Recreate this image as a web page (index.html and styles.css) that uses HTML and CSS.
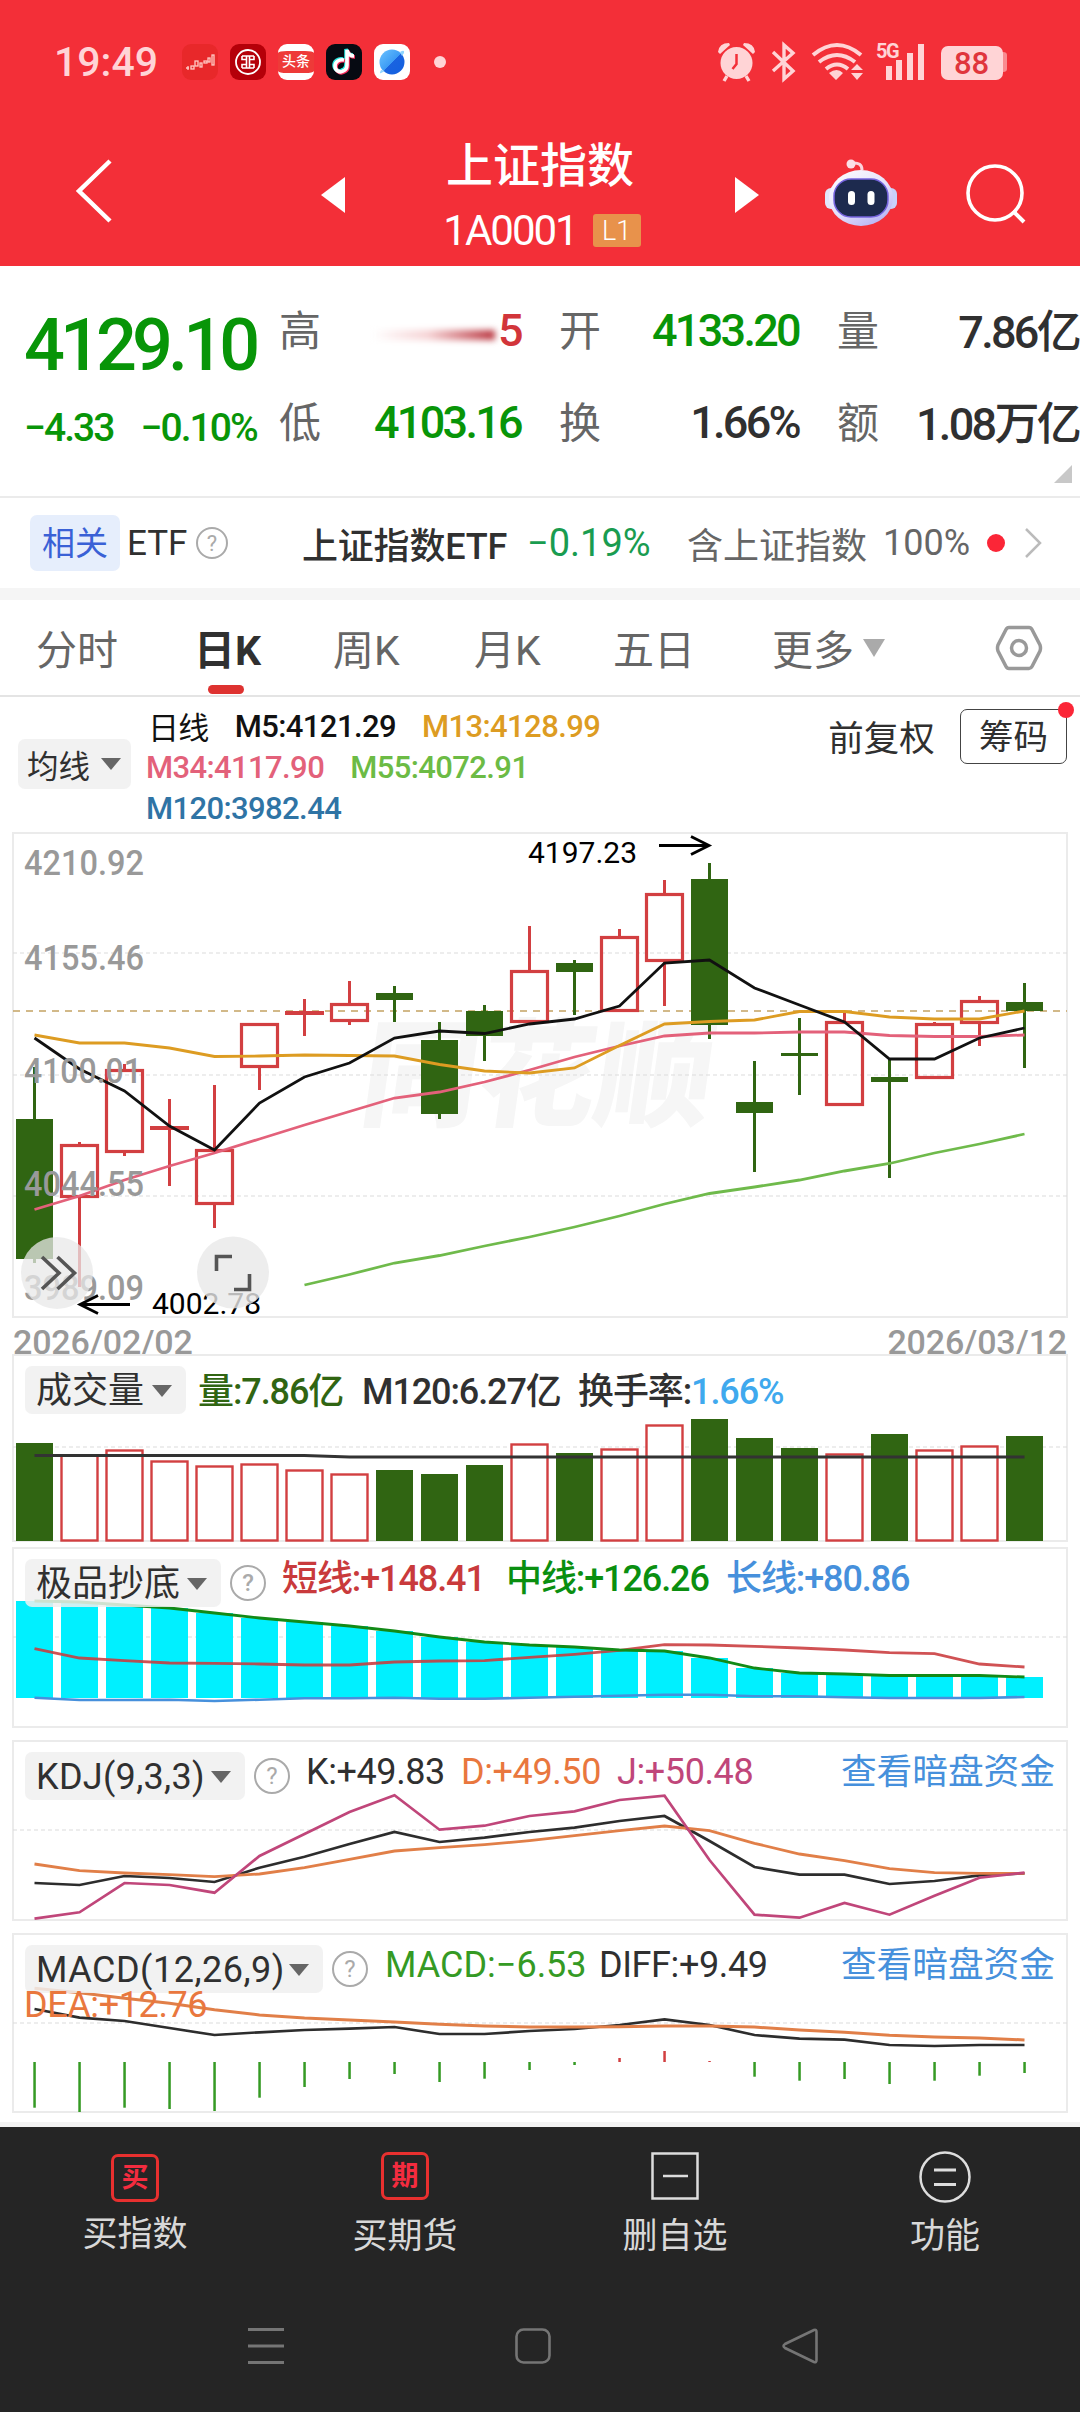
FILE: index.html
```html
<!DOCTYPE html>
<html lang="zh-CN">
<head>
<meta charset="UTF-8">
<meta name="viewport" content="width=device-width, initial-scale=1.0">
<title>上证指数 1A0001</title>
<link rel="stylesheet" href="styles.css">
</head>
<body>
<header class="header">
  <div class="status">
    <span class="time">19:49</span>
    <div class="apps">
      <svg class="app" viewBox="0 0 36 36"><rect width="36" height="36" rx="9" fill="#e8282a"/><g fill="none" stroke="#ffc9c4" stroke-width="1.3"><path d="M4 24h3M6 22v4"/><rect x="9" y="22" width="3" height="3"/><rect x="13" y="17" width="3" height="5"/><rect x="18" y="19" width="2" height="4"/><rect x="22" y="17" width="3" height="2"/><rect x="26" y="14" width="2" height="4"/><rect x="30" y="11" width="2" height="10"/></g></svg>
      <svg class="app" viewBox="0 0 36 36"><rect width="36" height="36" rx="9" fill="#b50009"/><circle cx="18" cy="18" r="12" fill="none" stroke="#fff" stroke-width="1.800"/><path d="M12 12h12M12 24h12M16.500 12v12M19.500 12v12M12 12v3.500h4M24 12v3.500h-4M12 24v-3.500h4M24 24v-3.500h-4" fill="none" stroke="#fff" stroke-width="1.600"/></svg>
      <span class="app toutiao">头条</span>
      <svg class="app" viewBox="0 0 36 36"><rect width="36" height="36" rx="9" fill="#060a12"/><g fill="none" stroke-width="3.600"><path d="M18 16c-5-1-9 2-9 6 0 5 5 7 8 5 3-1 4-3 4-6V6c1 4 4 6 7 6" stroke="#25e5de" transform="translate(-1 -1)"/><path d="M18 16c-5-1-9 2-9 6 0 5 5 7 8 5 3-1 4-3 4-6V6c1 4 4 6 7 6" stroke="#f82b5c" transform="translate(1 1)"/><path d="M18 16c-5-1-9 2-9 6 0 5 5 7 8 5 3-1 4-3 4-6V6c1 4 4 6 7 6" stroke="#fff"/></g></svg>
      <svg class="app" viewBox="0 0 36 36"><defs><linearGradient id="planet" x1="0" y1="0" x2="1" y2="1"><stop offset="0" stop-color="#6cc3ff"/><stop offset=".5" stop-color="#3d9cf5"/><stop offset=".52" stop-color="#1a63e0"/><stop offset="1" stop-color="#1260e0"/></linearGradient></defs><rect width="36" height="36" rx="9" fill="#fff"/><circle cx="18" cy="18" r="12.500" fill="url(#planet)"/><path d="M7 29Q5 30 7 26L11 27zM26 8Q31 5 30 9L28 12z" fill="#8fd4ff"/></svg>
      <i class="more-dot"></i>
    </div>
    <svg class="status-icons" viewBox="714 40 296 44">
      <g fill="#ffd4d6">
        <circle cx="736.500" cy="63" r="16"/><path d="M718 52q1-9 11-9l1 2-10 9zM755 52q-1-9-11-9l-1 2 10 9z"/>
      </g>
      <g fill="none" stroke="#ffd4d6" stroke-width="3.400">
        <path d="M727 76l-3 5M746 76l3 5"/>
        <path d="M773 52l20 19-9 8V45l9 8-20 18"/>
        <path d="M813 55q24-20 48 0M819 62q18-14 36 0M826 69q11-9 22 0" stroke-width="4"/>
      </g>
      <path d="M736.500 54v10l-4 5" fill="none" stroke="#f32f38" stroke-width="2.500"/>
      <path d="M829 73q8-6 14 0l-7 7zM851 70l6-6 6 6zM851 73h12l-6 7zM886 66h6v14h-6zM896 60h6v20h-6zM907 53h6v27h-6zM918 44h6v36h-6z" fill="#ffd4d6"/>
      <text x="876" y="58" class="net">5G</text>
      <path d="M1000 52h3q4 0 4 3v14q0 3-4 3h-3z" fill="#f98b90"/>
      <rect x="941" y="46" width="62" height="34" rx="7" fill="#ffd4d6"/>
      <text x="954" y="74" class="battery">88</text>
    </svg>
  </div>
  <nav class="nav">
    <svg class="back" viewBox="0 0 40 66"><path d="M36 3L5 33l31 30" fill="none" stroke="#fff" stroke-width="4.500"/></svg>
    <svg class="arrow" viewBox="0 0 24 36"><path d="M24 0v36L0 18z" fill="#fff"/></svg>
    <div class="title">
      <h1>上证指数</h1>
      <div class="code"><span>1A0001</span><b>L1</b></div>
    </div>
    <svg class="arrow" viewBox="0 0 24 36"><path d="M0 0v36l24-18z" fill="#fff"/></svg>
    <svg class="robot" viewBox="824 156 74 70">
      <defs><linearGradient id="head" x1="0" y1="0" x2=".7" y2="1"><stop offset="0" stop-color="#fff"/><stop offset=".6" stop-color="#e4e0fb"/><stop offset="1" stop-color="#b9b5f5"/></linearGradient></defs>
      <path d="M862 168q0-8-10-7" fill="none" stroke="#fbd3dc" stroke-width="3"/><circle cx="851" cy="162" r="4.500" fill="#fbdfe6"/>
      <rect x="825" y="186" width="14" height="21" rx="6" fill="#e2e6fb"/><rect x="883" y="186" width="14" height="21" rx="6" fill="#c9d0fa"/>
      <ellipse cx="861" cy="196" rx="32" ry="28" fill="url(#head)"/>
      <rect x="834" y="177" width="54" height="38" rx="17" fill="#1d2a4e" stroke="#7563de" stroke-width="1.500"/>
      <rect x="848" y="189" width="7" height="14" rx="3.500" fill="#fff"/><rect x="867.500" y="189" width="7" height="14" rx="3.500" fill="#fff"/>
    </svg>
    <svg class="search" viewBox="0 0 60 60"><circle cx="29" cy="29" r="27" fill="none" stroke="#fff" stroke-width="3.600"/><path d="M47 47l11 11" stroke="#fff" stroke-width="4"/></svg>
  </nav>
</header>

<section class="quote">
  <div class="price">
    <strong>4129.10</strong>
    <div class="change"><span>−4.33</span><span>−0.10%</span></div>
  </div>
  <dl class="stats">
    <div><dt>高</dt><dd class="red"><i class="smear"></i>5</dd></div>
    <div><dt>开</dt><dd class="green">4133.20</dd></div>
    <div><dt>量</dt><dd>7.86亿</dd></div>
    <div><dt>低</dt><dd class="green">4103.16</dd></div>
    <div><dt>换</dt><dd>1.66%</dd></div>
    <div><dt>额</dt><dd>1.08万亿</dd></div>
  </dl>
  <i class="fold"></i>
</section>

<section class="etf">
  <span class="tag">相关</span>
  <span class="etf-label">ETF</span>
  <i class="help">?</i>
  <span class="etf-name">上证指数ETF</span>
  <span class="etf-rate">−0.19%</span>
  <span class="etf-hold">含上证指数</span>
  <span class="etf-pct">100%</span>
  <i class="red-dot"></i>
  <svg class="chev" viewBox="0 0 18 32"><path d="M2 2l14 14L2 30" fill="none" stroke="#bbb" stroke-width="2.500"/></svg>
</section>

<nav class="tabs">
  <span>分时</span>
  <span class="active">日K</span>
  <span>周K</span>
  <span>月K</span>
  <span>五日</span>
  <span>更多</span>
  <i class="caret big"></i>
  <svg class="gear" viewBox="0 0 48 46"><path d="M14 2.500h20q2 0 3 2L45 20q1 3 0 6L37 41.500q-1 2-3 2H14q-2 0-3-2L3 26q-1-3 0-6L11 4.500q1-2 3-2z" fill="none" stroke="#999" stroke-width="3.500"/><circle cx="24" cy="23" r="7.500" fill="none" stroke="#999" stroke-width="3.500"/></svg>
</nav>

<section class="ma">
  <span class="chip">均线<i class="caret"></i></span>
  <div class="ma-list">
    <div class="ma-row first"><span>日线</span><span>M5:4121.29</span><span class="m13">M13:4128.99</span></div>
    <div class="ma-row"><span class="m34">M34:4117.90</span><span class="m55">M55:4072.91</span></div>
    <div class="ma-row"><span class="m120">M120:3982.44</span></div>
  </div>
  <span class="adjust">前复权</span>
  <span class="chips">筹码<i class="red-dot"></i></span>
</section>

<main class="charts">
  <div class="panel kline"><svg id="kline" viewBox="12 832 1056 486"></svg></div>
  <div class="dates"><span>2026/02/02</span><span>2026/03/12</span></div>

  <div class="panel volume">
    <svg id="volume" viewBox="12 1354 1056 188"></svg>
    <div class="legend">
      <span class="chip">成交量<i class="caret"></i></span>
      <span class="vol-a">量:7.86亿</span><span class="vol-b">M120:6.27亿</span><span class="vol-c">换手率:<em>1.66%</em></span>
    </div>
  </div>

  <div class="panel bottom-fish">
    <svg id="fish" viewBox="12 1547 1056 181"></svg>
    <div class="legend">
      <span class="chip">极品抄底<i class="caret"></i></span><i class="help">?</i>
      <span class="f-a">短线:+148.41</span><span class="f-b">中线:+126.26</span><span class="f-c">长线:+80.86</span>
    </div>
  </div>

  <div class="panel kdj">
    <svg id="kdj" viewBox="12 1740 1056 181"></svg>
    <div class="legend">
      <span class="chip">KDJ(9,3,3)<i class="caret"></i></span><i class="help">?</i>
      <span class="k-a">K:+49.83</span><span class="k-b">D:+49.50</span><span class="k-c">J:+50.48</span>
      <a class="link">查看暗盘资金</a>
    </div>
  </div>

  <div class="panel macd">
    <svg id="macd" viewBox="12 1933 1056 180"></svg>
    <div class="legend">
      <span class="chip">MACD(12,26,9)<i class="caret"></i></span><i class="help">?</i>
      <span class="m-a">MACD:−6.53</span><span class="m-b">DIFF:+9.49</span>
      <a class="link">查看暗盘资金</a>
      <span class="m-c">DEA:+12.76</span>
    </div>
  </div>
</main>

<footer class="footer">
  <div class="actions">
    <div><i class="box">买</i><span>买指数</span></div>
    <div class="up"><i class="box">期</i><span>买期货</span></div>
    <div class="up"><svg viewBox="0 0 48 48"><path d="M1.500 1.500h45v45h-45zM12 24h25" fill="none" stroke="#ddd" stroke-width="2.500"/></svg><span>删自选</span></div>
    <div class="up"><svg class="func" viewBox="0 0 52 52"><circle cx="26" cy="26" r="24.500" fill="none" stroke="#ddd" stroke-width="2.500"/><path d="M15 19h22M15 33.500h22" stroke="#ddd" stroke-width="2.800"/></svg><span>功能</span></div>
  </div>
  <div class="system">
    <svg viewBox="0 0 36 36"><path d="M0 1.500h36M0 18h36M0 34.500h36" stroke="#757575" stroke-width="3"/></svg>
    <svg viewBox="0 0 36 36"><rect x="1.500" y="1.500" width="33" height="33" rx="7" fill="none" stroke="#757575" stroke-width="2.600"/></svg>
    <svg viewBox="0 0 36 36"><path d="M32 2Q34.500 1 34.500 4v28q0 3-2.500 2L3 20Q0 18 3 16z" fill="none" stroke="#757575" stroke-width="2.600"/></svg>
  </div>
</footer>

<script>
const GREEN = '#306512';
const RED = '#d23f41';
const STEP = 45;
const cx = i => 34.5 + i * STEP;

// g/r, high, body top, body bottom, low
const candles = [
  ['g', 1067, 1119, 1259, 1263], ['r', 1142, 1144, 1198, 1287], ['r', 1064, 1069, 1153, 1156],
  ['r', 1099, 1126, 1130, 1186], ['r', 1085, 1149, 1205, 1228], ['r', 1023, 1023, 1068, 1090],
  ['r', 999, 1011, 1015, 1036], ['r', 981, 1003, 1022, 1025], ['g', 986, 993, 1000, 1022],
  ['g', 1022, 1040, 1114, 1119], ['g', 1005, 1011, 1036, 1061], ['r', 926, 970, 1023, 1023],
  ['g', 960, 963, 972, 1015], ['r', 929, 936, 1012, 1012], ['r', 880, 893, 962, 1006],
  ['g', 863, 879, 1025, 1039], ['g', 1061, 1102, 1113, 1172], ['g', 1018, 1053, 1056, 1095],
  ['r', 1011, 1021, 1106, 1106], ['g', 1058, 1077, 1082, 1178], ['r', 1022, 1023, 1079, 1079],
  ['r', 996, 1000, 1024, 1046], ['g', 983, 1002, 1011, 1068]
];
const ma5 = [1038, 1069, 1091, 1126, 1150, 1103, 1077, 1063, 1038, 1031, 1033.5, 1024, 1019, 1006, 963, 960, 988, 1005, 1022, 1059, 1059, 1038, 1028];
const ma13 = [1035, 1043, 1043, 1048, 1056.5, 1056, 1055, 1055.5, 1056, 1064.5, 1071, 1073, 1068, 1045.5, 1024, 1021.5, 1020, 1011.5, 1011.5, 1017, 1019, 1019, 1011];
const ma34 = [1209.5, 1196, 1180, 1166, 1153, 1139, 1125, 1111.5, 1098, 1092, 1082, 1070, 1057, 1046, 1036, 1033, 1033, 1032, 1032, 1035.5, 1036.5, 1036.5, 1035];
const ma55 = [1285, 1274.5, 1263, 1255.5, 1246, 1237, 1227, 1216, 1204, 1193.5, 1187, 1180, 1171, 1163.5, 1153, 1144, 1134];
const volume = [1443, 1454, 1449, 1460, 1465, 1463, 1469, 1473, 1470, 1474, 1465, 1443, 1453, 1448, 1424, 1419, 1438, 1448, 1453, 1434, 1449, 1445, 1436];
const volMa = volume.map((v, i) => i < 7 ? 1455.5 : 1457);
const mid = [1601, 1602, 1605, 1608, 1613, 1618, 1622, 1626, 1631, 1637, 1642, 1645, 1647, 1650, 1651, 1658, 1668, 1673, 1674, 1675.5, 1675.5, 1675.5, 1677];
const short = [1648.7, 1658, 1660.7, 1663, 1663.3, 1664, 1665, 1665, 1662, 1661, 1660.7, 1657.3, 1654.3, 1650.3, 1644.7, 1645, 1646.3, 1648, 1650, 1652.7, 1653.7, 1664, 1667];
const long = [1697.7, 1700, 1700, 1699.7, 1701, 1699.7, 1698.3, 1698.3, 1697.7, 1698.7, 1698.7, 1697.7, 1696.7, 1695.7, 1694.7, 1694.7, 1696.3, 1696.3, 1697.3, 1698, 1698, 1698, 1697];
const K = [1883, 1885, 1876, 1878, 1882, 1867.7, 1856.7, 1844, 1832, 1842, 1837.7, 1832, 1827.7, 1821, 1816, 1841, 1867, 1874.7, 1874.7, 1884, 1881, 1875.3, 1873.3];
const D = [1864, 1870.7, 1873, 1874.7, 1876.7, 1874, 1867.7, 1859.3, 1851, 1847.7, 1844.7, 1840.7, 1835.7, 1830.7, 1826, 1830.7, 1843.3, 1854, 1860.7, 1868.7, 1872.7, 1873.3, 1873.3];
const J = [1918.7, 1912.3, 1883, 1885, 1892.7, 1856, 1834, 1812, 1795.3, 1829.7, 1825.7, 1816, 1811.3, 1800, 1795.7, 1860, 1914.7, 1917.7, 1903, 1914.7, 1895.7, 1877.7, 1872.7];
const diff = [2009, 2017.7, 2021, 2028, 2035, 2032.3, 2030, 2028.7, 2027, 2034, 2034, 2031, 2029, 2025, 2019.3, 2025, 2035, 2038.7, 2039.7, 2045, 2046, 2045, 2045];
const dea = [1988.3, 1992.7, 1998.3, 2003.3, 2009.7, 2015, 2018, 2020, 2022, 2024.3, 2026, 2027, 2027, 2026.7, 2026, 2026, 2027, 2030, 2032.3, 2035.3, 2037, 2038, 2040];
const macd = [2107.7, 2112, 2107.7, 2109, 2111, 2097.7, 2087, 2079, 2074, 2082, 2078.7, 2070, 2065, 2058, 2051, 2061, 2076.7, 2080.7, 2079, 2084, 2080.7, 2075.7, 2073];

function line(data, color, width = 2.7, from = 0) {
  const pts = data.map((y, i) => `${cx(i + from)},${y}`).join(' ');
  return `<polyline points="${pts}" fill="none" stroke="${color}" stroke-width="${width}"/>`;
}
function rect(x, y, w, h, fill) {
  return `<rect x="${x}" y="${y}" width="${w}" height="${h}" fill="${fill}"/>`;
}
function frame(y, h) {
  return `<rect x="13" y="${y}" width="1054" height="${h}" fill="none" stroke="#ebebeb" stroke-width="2"/>`;
}
function grid(y) {
  return `<path d="M13 ${y}H1067" stroke="#dcdcdc" stroke-width="1.200" stroke-dasharray="4 3"/>`;
}
function label(text, x, y, cls, w) {
  return `<text x="${x}" y="${y}" class="${cls}" textLength="${w}" lengthAdjust="spacingAndGlyphs">${text}</text>`;
}

function drawKline() {
  let s = frame(833, 484) + '<text class="watermark" transform="translate(357 1117) skewX(-8)">同花顺</text>';
  s += [953, 1075, 1196].map(grid).join('');
  s += '<path d="M13 1011H1067" stroke="#c4a263" stroke-width="1.600" stroke-dasharray="7 6"/>';
  candles.forEach(([c, hi, top, bot, lo], i) => {
    const x = cx(i);
    if (c === 'g') {
      s += rect(x - 1.5, hi, 3, lo - hi, GREEN) + rect(x - 18.5, top, 37, bot - top, GREEN);
    } else {
      s += rect(x - 1.5, hi, 3, top - hi, RED) + rect(x - 1.5, bot, 3, lo - bot, RED);
      s += bot - top < 6
        ? rect(x - 19.5, top, 39, bot - top, RED)
        : `<rect x="${x - 18}" y="${top + 1.5}" width="36" height="${bot - top - 3}" fill="none" stroke="${RED}" stroke-width="3.2"/>`;
    }
  });
  s += line(ma34, '#e3617a', 2.8) + line(ma55, '#6fba4b', 2.8, 6) + line(ma13, '#dd9c22', 2.8) + line(ma5, '#111', 2.8);
  s += label('4210.92', 24, 875, 'axis', 120) + label('4155.46', 24, 970, 'axis', 120) + label('4100.01', 24, 1083, 'axis', 118);
  s += label('4044.55', 24, 1196, 'axis', 120) + label('3989.09', 24, 1300, 'axis', 120);
  s += label('4197.23', 528, 863, 'peak', 109) + label('4002.78', 152, 1314, 'peak', 109);
  s += '<path d="M659 845.500h50M691 836.500l18 9-18 9M130 1304.500H80M98 1295.500l-18 9 18 9" fill="none" stroke="#000" stroke-width="2.800"/>';
  s += '<circle cx="57" cy="1273" r="36" fill="#e8e8e8" fill-opacity=".75"/><circle cx="233" cy="1272.500" r="36" fill="#e8e8e8" fill-opacity=".8"/>';
  s += '<path d="M42 1257l17 16-17 16M57.500 1257l17 16-17 16M216.500 1271v-14.500H232M234 1289.500h15.500V1274" fill="none" stroke="#555" stroke-width="3.600"/>';
  document.getElementById('kline').innerHTML = s;
}

function drawVolume() {
  let s = frame(1355, 186) + grid(1447);
  volume.forEach((top, i) => {
    const x = cx(i);
    s += candles[i][0] === 'g'
      ? rect(x - 18.5, top, 37, 1541 - top, GREEN)
      : `<rect x="${x - 18}" y="${top + 1.5}" width="36" height="${1539 - top}" fill="#fff" stroke="${RED}" stroke-width="2.4"/>`;
  });
  document.getElementById('volume').innerHTML = s + line(volMa, '#333', 2.8);
}

function drawFish() {
  let s = frame(1548, 179) + grid(1637);
  mid.forEach((top, i) => { s += rect(cx(i) - 18.5, top, 37, 1698 - top, '#00f0ff'); });
  s += `<g opacity=".88">${line(short, '#c93a3c', 2.8)}</g>` + line(long, '#4690dc', 2.6) + line(mid, '#128a17', 2.8);
  document.getElementById('fish').innerHTML = s;
}

function drawKdj() {
  document.getElementById('kdj').innerHTML = frame(1741, 179) + grid(1830) +
    line(K, '#2d2d2d') + line(D, '#e17f48', 2.8) + line(J, '#c0467a');
}

function drawMacd() {
  let s = frame(1934, 178) + grid(2023);
  macd.forEach((y, i) => {
    s += y < 2062 ? rect(cx(i) - 1.2, y, 2.5, 2062 - y, RED) : rect(cx(i) - 1.2, 2062, 2.5, y - 2062, '#359a24');
  });
  document.getElementById('macd').innerHTML = s + line(diff, '#2d2d2d') + line(dea, '#e17f48', 3);
}

drawKline();
drawVolume();
drawFish();
drawKdj();
drawMacd();
</script>
</body>
</html>
```
FILE: styles.css
```css
* {
  box-sizing: border-box;
}

body {
  margin: 0;
  width: 1080px;
  height: 2412px;
  overflow: hidden;
  background: #fff;
  color: #303030;
  font-family: Roboto, "Noto Sans CJK SC", sans-serif;
  display: flex;
  flex-direction: column;
}

i, em {
  font-style: normal;
}

svg {
  display: block;
  flex: none;
}

span, a {
  white-space: nowrap;
}

/* red header */
.header {
  height: 266px;
  background: #f32f38;
  color: #fff;
}

.status {
  height: 124px;
  padding: 0 70px 0 54px;
  display: flex;
  align-items: center;
}

.time {
  width: 128px;
  font-size: 41px;
  font-weight: 500;
  color: #ffd4d6;
}

.apps {
  display: flex;
  align-items: center;
  gap: 12px;
  flex: 1;
}

.app {
  width: 36px;
  height: 36px;
}

.toutiao {
  border-radius: 9px;
  border-top: 7px solid #fff;
  border-bottom: 7px solid #fff;
  background: #ee3a38;
  font-size: 14px;
  font-weight: 500;
  line-height: 21px;
  text-align: center;
}

.more-dot {
  width: 12px;
  height: 12px;
  margin-left: 12px;
  border-radius: 50%;
  background: #ffd4d6;
}

.status-icons {
  width: 296px;
  height: 44px;
  overflow: visible;
}

.net {
  font-size: 20px;
  font-weight: 700;
  fill: #ffd4d6;
  letter-spacing: -1.500px;
}

.battery {
  font-size: 31px;
  font-weight: 500;
  fill: #e0353c;
}

.nav {
  height: 142px;
  display: flex;
  align-items: center;
  padding-left: 74px;
}

.back {
  width: 40px;
  height: 66px;
  margin: -8px 207px 0 0;
}

.arrow {
  width: 24px;
  height: 36px;
}

.title {
  width: 390px;
  text-align: center;
}

.title h1 {
  margin: 2px 0 0;
  font-size: 47px;
  font-weight: 500;
  line-height: 66px;
}

.code {
  height: 60px;
  display: flex;
  align-items: center;
  justify-content: center;
  gap: 16px;
  padding: 2px 0 0 4px;
  font-size: 42px;
  letter-spacing: -2px;
}

.code b {
  width: 48px;
  height: 33px;
  border-radius: 3px;
  background: #e8924b;
  font-size: 27px;
  font-weight: 300;
  line-height: 34px;
  letter-spacing: 0;
}

.robot {
  width: 74px;
  height: 70px;
  margin: -4px 0 0 65px;
}

.search {
  width: 60px;
  height: 60px;
  margin: -3px 0 0 68px;
}

/* quote block */
.quote {
  position: relative;
  height: 232px;
  display: flex;
  border-bottom: 2px solid #ebebeb;
}

.price {
  width: 279px;
  padding: 38px 0 0 24px;
  color: #089508;
}

.price strong {
  display: block;
  font-size: 72px;
  font-weight: 500;
  line-height: 84px;
  letter-spacing: -0.068em;
}

.change {
  display: flex;
  gap: 27px;
  margin-top: 15px;
  font-size: 39px;
  line-height: 50px;
  font-weight: 500;
  letter-spacing: -0.050em;
}

.stats {
  margin: 0;
  padding-top: 18px;
  display: grid;
  grid-template-columns: 242px 240px 242px;
  grid-auto-rows: 92px;
  column-gap: 38px;
}

.stats div {
  display: flex;
  align-items: center;
  justify-content: space-between;
}

.stats dt {
  margin-top: -6px;
  color: #666;
  font-size: 42px;
}

.stats dd {
  margin: 0;
  display: flex;
  align-items: center;
  font-size: 45px;
  font-weight: 500;
  letter-spacing: -0.060em;
}

/* the mixed-script values sit a touch lower than plain digits */
.stats div:nth-child(3n) dd {
  margin: -4px 0 0;
}

.red {
  color: #d2353a;
}

.green {
  color: #089508;
}

.smear {
  width: 122px;
  height: 10px;
  margin: 10px 3px 0 0;
  background: linear-gradient(90deg, #fff, #f6d3d5 45%, #b8323c);
  filter: blur(3px);
}

.fold {
  position: absolute;
  right: 8px;
  bottom: 13px;
  border-left: 18px solid transparent;
  border-bottom: 18px solid #c8c8c8;
}

/* related ETF */
.etf {
  height: 102px;
  padding-left: 30px;
  display: flex;
  align-items: center;
  border-bottom: 12px solid #f5f5f5;
  font-size: 36px;
}

.tag {
  width: 90px;
  height: 56px;
  border-radius: 7px;
  background: #e6eefc;
  color: #3a61d6;
  font-size: 33px;
  line-height: 57px;
  text-align: center;
}

.etf-label {
  width: 60px;
  margin: 0 9px 0 7px;
  font-size: 35px;
}

.help {
  width: 36px;
  height: 36px;
  border: 2px solid #aaa;
  border-radius: 50%;
  color: #aaa;
  font-size: 24px;
  line-height: 33px;
  text-align: center;
}

.etf .help {
  width: 32px;
  height: 32px;
  font-size: 22px;
  line-height: 29px;
}

.etf-name {
  width: 225px;
  margin-left: 74px;
  font-size: 36px;
  font-weight: 500;
  letter-spacing: -0.200px;
}

.etf-rate {
  width: 160px;
  color: #199c50;
  font-size: 38px;
}

.etf-hold {
  width: 196px;
  color: #666;
}

.etf-pct {
  width: 104px;
  color: #666;
}

.red-dot {
  width: 18px;
  height: 18px;
  border-radius: 50%;
  background: #fb2637;
}

.chev {
  width: 18px;
  height: 32px;
  margin-left: 19px;
}

/* period tabs */
.tabs {
  height: 97px;
  display: flex;
  align-items: center;
  border-bottom: 2px solid #e4e4e4;
  padding-left: 36px;
  color: #666;
  font-size: 41px;
}

.tabs span {
  position: relative;
  top: -1px;
  width: 139px;
}

.tabs span:nth-child(1) {
  width: 158px;
}

.tabs span:nth-child(3) {
  width: 141px;
}

.tabs span:nth-child(5) {
  width: 159px;
}

.tabs span:nth-child(6) {
  width: 91px;
}

.tabs .active {
  color: #303030;
  font-weight: 700;
}

.tabs .active::after {
  content: "";
  position: absolute;
  left: 14px;
  bottom: -17px;
  width: 36px;
  height: 9px;
  border-radius: 5px;
  background: #de3230;
}

.caret {
  border: 10px solid transparent;
  border-top: 12px solid #666;
  border-bottom: 0;
}

.caret.big {
  border-width: 18px 11px 0;
  border-top-color: #aaa;
}

.gear {
  width: 48px;
  height: 46px;
  margin-left: 110px;
}

/* moving average legend */
.ma {
  height: 135px;
  display: flex;
  align-items: flex-start;
  padding: 9px 13px 0 18px;
}

.chip {
  height: 48px;
  display: flex;
  align-items: center;
  justify-content: space-between;
  border-radius: 7px;
  background: rgba(240, 240, 240, 0.850);
}

.ma .chip {
  width: 113px;
  height: 50px;
  margin-top: 33px;
  padding: 0 10px 0 9px;
  font-size: 31.500px;
}

.ma-list {
  width: 680px;
  padding-left: 15px;
  font-size: 31px;
  font-weight: 500;
  letter-spacing: -0.600px;
}

.ma-row {
  height: 41px;
  display: flex;
  align-items: center;
  gap: 26px;
}

.first {
  color: #111;
  padding-left: 2px;
}

.first span:first-child {
  margin-top: -2px;
  font-weight: 400;
}

.m13 { color: #dd9c22; }
.m34 { color: #e3617a; }
.m55 { color: #6cbb45; }
.m120 { color: #2f74a5; }

.adjust {
  width: 132px;
  margin-left: 18px;
  font-size: 35.500px;
  line-height: 67px;
}

.chips {
  position: relative;
  width: 107px;
  height: 55px;
  margin-top: 3px;
  border: 1.500px solid #444;
  border-radius: 7px;
  font-size: 34.500px;
  line-height: 55px;
  text-align: center;
}

.chips .red-dot {
  position: absolute;
  top: -8px;
  right: -8px;
  width: 16px;
  height: 16px;
}

/* charts */
.charts {
  display: flex;
  flex-direction: column;
  align-items: center;
}

.panel {
  display: grid;
  width: 1056px;
}

.panel > * {
  grid-area: 1 / 1;
}

.panel svg {
  width: 1056px;
  height: 100%;
}

.kline { height: 486px; }
.volume { height: 188px; }
.bottom-fish { height: 181px; margin-top: 5px; }
.kdj { height: 181px; margin-top: 12px; }
.macd { height: 180px; margin-top: 12px; }

.axis {
  font-size: 35px;
  font-weight: 500;
  fill: #999;
}

.peak {
  font-size: 29px;
  fill: #000;
}

.watermark {
  font-size: 117px;
  font-weight: 900;
  fill: #f6f6f6;
}

.dates {
  width: 1056px;
  height: 36px;
  padding: 0 1px;
  display: flex;
  justify-content: space-between;
  font-size: 34px;
  font-weight: 500;
  line-height: 49px;
  letter-spacing: -0.150px;
  color: #999;
}

.legend {
  z-index: 1;
  padding: 12px 13px 0 13px;
  display: flex;
  flex-wrap: wrap;
  align-items: flex-start;
  align-content: flex-start;
  font-size: 36px;
  font-weight: 500;
  line-height: 38px;
  letter-spacing: -1.100px;
}

.legend .chip {
  padding: 2px 14px 0 11px;
  font-weight: 400;
  letter-spacing: 0;
}

.legend .help {
  margin: 6px 0 0 9px;
  line-height: 32px;
  letter-spacing: 0;
}

.legend > span:not(.chip),
.link {
  padding-top: 1px;
}

.volume .legend > span:not(.chip) { padding-top: 7px; }
.volume .chip { width: 161px; }
.vol-a { color: #306512; width: 164px; margin-left: 12px; }
.vol-b { width: 216px; }
.vol-c em { color: #3fa9ee; }

.bottom-fish .chip { width: 196px; }
.f-a { color: #c93a3c; width: 224px; margin-left: 16px; }
.f-b { color: #0a8f10; width: 220px; }
.f-c { color: #4690dc; }

.kdj .legend,
.macd .legend {
  font-weight: 400;
  letter-spacing: -0.400px;
}

.kdj .chip { width: 220px; letter-spacing: 0.300px; }
.k-a { width: 155px; margin-left: 16px; }
.k-b { width: 156px; color: #e9773e; }
.k-c { color: #c0467a; }

.macd .chip { width: 298px; letter-spacing: 0.500px; }
.m-a { width: 214px; margin-left: 17px; color: #359a24; letter-spacing: 0; }
.m-c { color: #e9773e; margin: -8px 0 0 -1px; }

.link {
  margin-left: auto;
  color: #4690dc;
  font-size: 35.700px;
  font-weight: 400;
  letter-spacing: 0;
}

/* bottom bar */
.footer {
  flex: 1;
  margin-top: 9px;
  border-top: 5px solid #f3f3f3;
  background: #252525;
  color: #d8d8d8;
}

.actions {
  height: 163px;
  padding-top: 27px;
  display: grid;
  grid-template-columns: repeat(4, 270px);
}

.actions div {
  display: flex;
  flex-direction: column;
  align-items: center;
  font-size: 35px;
  line-height: 66px;
}

.actions svg,
.box {
  width: 48px;
  height: 48px;
}

.actions .up svg,
.up .box {
  margin-top: -2px;
  margin-bottom: 4px;
}

.actions .func {
  width: 52px;
  height: 52px;
}

.actions .up .func {
  margin: -3px 0 1px;
}

.box {
  border: 3px solid #e8302f;
  border-radius: 7px;
  color: #f42c3f;
  font-size: 27px;
  font-weight: 700;
  line-height: 42px;
  text-align: center;
}

.system {
  padding-top: 38px;
  display: flex;
  padding-left: 248px;
  gap: 231px;
}

.system svg {
  width: 36px;
  height: 36px;
}
```
